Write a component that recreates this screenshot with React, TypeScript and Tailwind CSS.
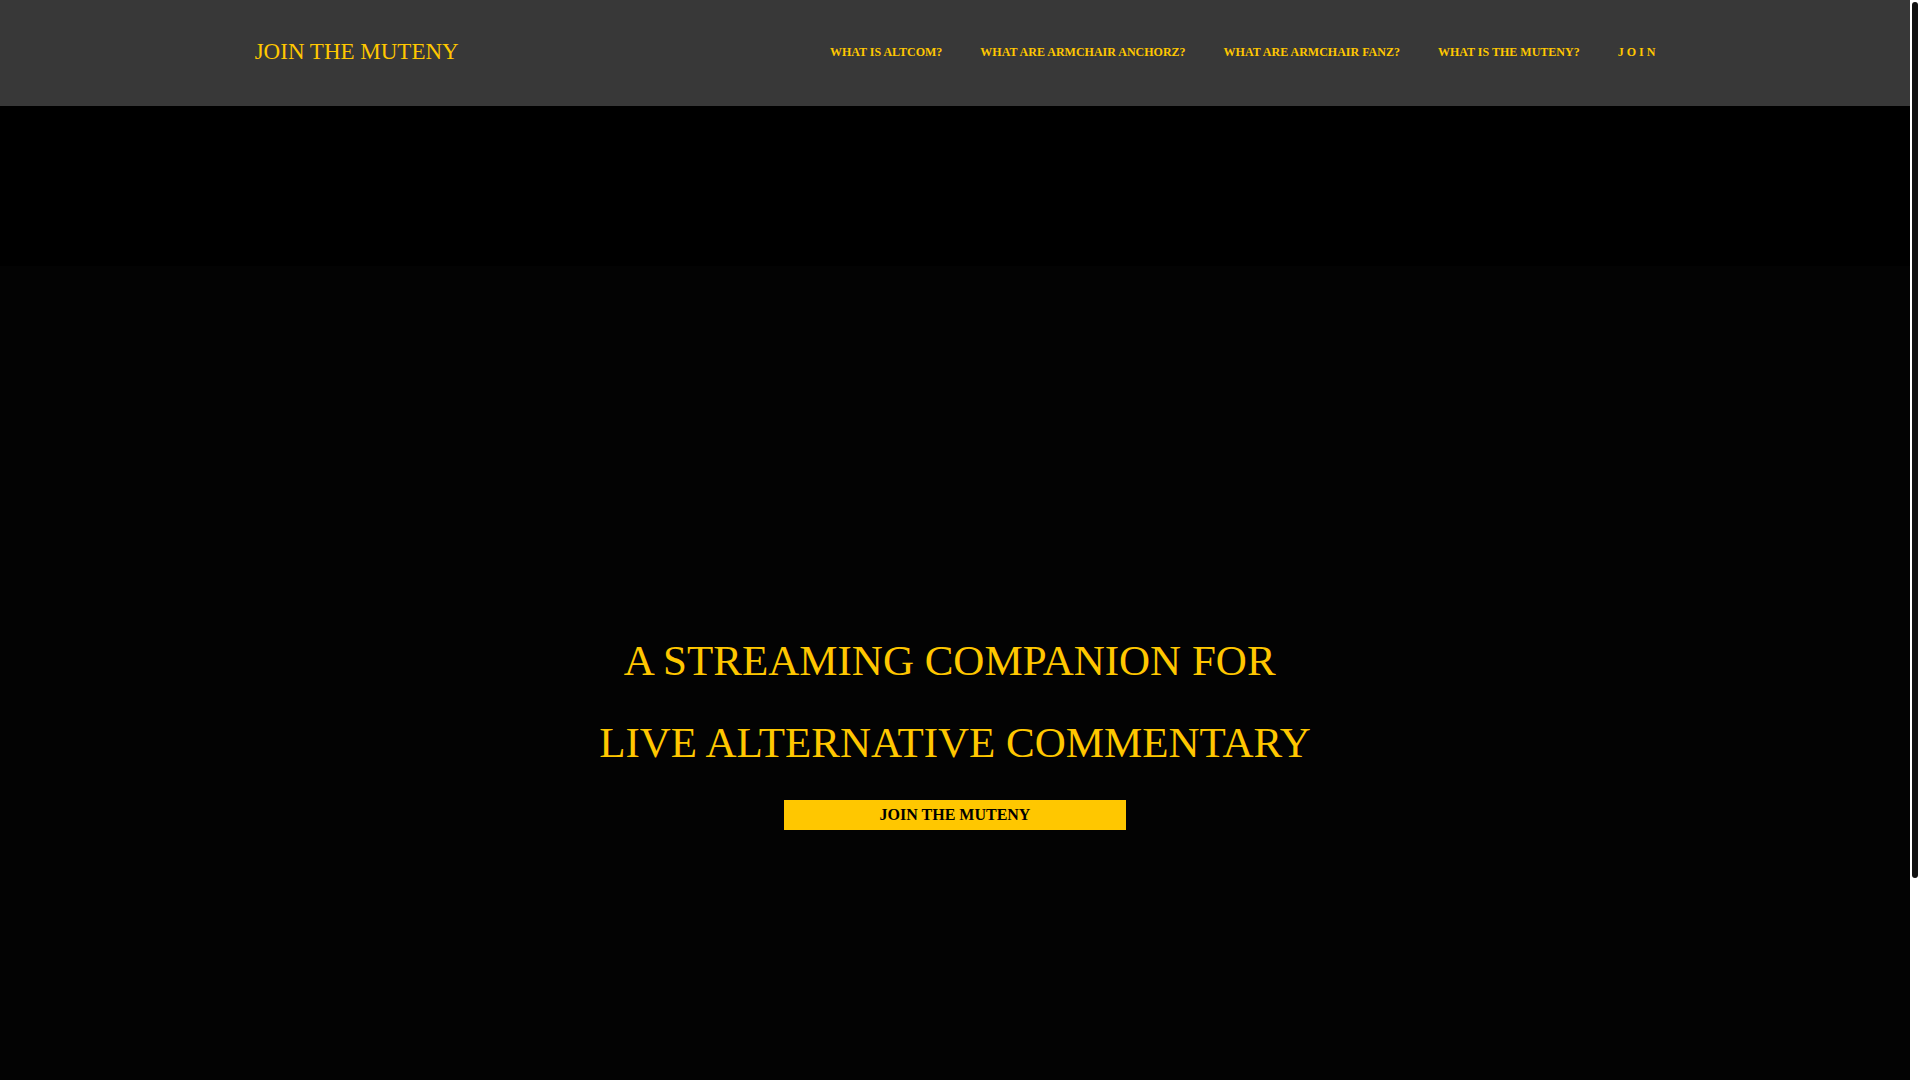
import React from 'react';

const navLinks = [
  { label: 'WHAT IS ALTCOM?', href: '#altcom' },
  { label: 'WHAT ARE ARMCHAIR ANCHORZ?', href: '#anchorz' },
  { label: 'WHAT ARE ARMCHAIR FANZ?', href: '#fanz' },
  { label: 'WHAT IS THE MUTENY?', href: '#muteny' },
  { label: 'J O I N', href: '#join' },
];

const Header: React.FC = () => (
  <header className="bg-[#383838] text-[#ffc700]">
    <div className="mx-auto flex w-11/15 items-center justify-between pt-[37px] pb-[39px]">
      <a href="#" className="text-[23px] leading-[30px]">
        JOIN THE MUTENY
      </a>
      <nav className="flex gap-[38px]">
        {navLinks.map((link) => (
          <a key={link.href} href={link.href} className="text-xs leading-5 font-bold">
            {link.label}
          </a>
        ))}
      </nav>
    </div>
  </header>
);

const Hero: React.FC = () => (
  <main className="mt-40 flex flex-1 flex-col items-center bg-[#030303] pt-[354px]">
    <h1 className="text-center text-[43px] leading-[82px] text-[#ffc700]">
      A STREAMING COMPANION FOR&nbsp;
      <br />
      LIVE ALTERNATIVE COMMENTARY
    </h1>
    <button
      type="button"
      className="mt-4 w-[342px] bg-[#ffc700] text-base leading-[30px] font-bold text-black"
    >
      JOIN THE MUTENY
    </button>
  </main>
);

const App: React.FC = () => {
  return (
    <div className="flex h-screen overflow-hidden bg-white font-['Liberation_Serif',serif]">
      <div className="flex flex-1 flex-col bg-black">
        <Header />
        <Hero />
      </div>
      {/* scroll track */}
      <div className="w-2.5 px-0.5 pt-0.5">
        <div className="h-[81.3%] rounded-full bg-[#111111]" />
      </div>
    </div>
  );
};

export default App;
